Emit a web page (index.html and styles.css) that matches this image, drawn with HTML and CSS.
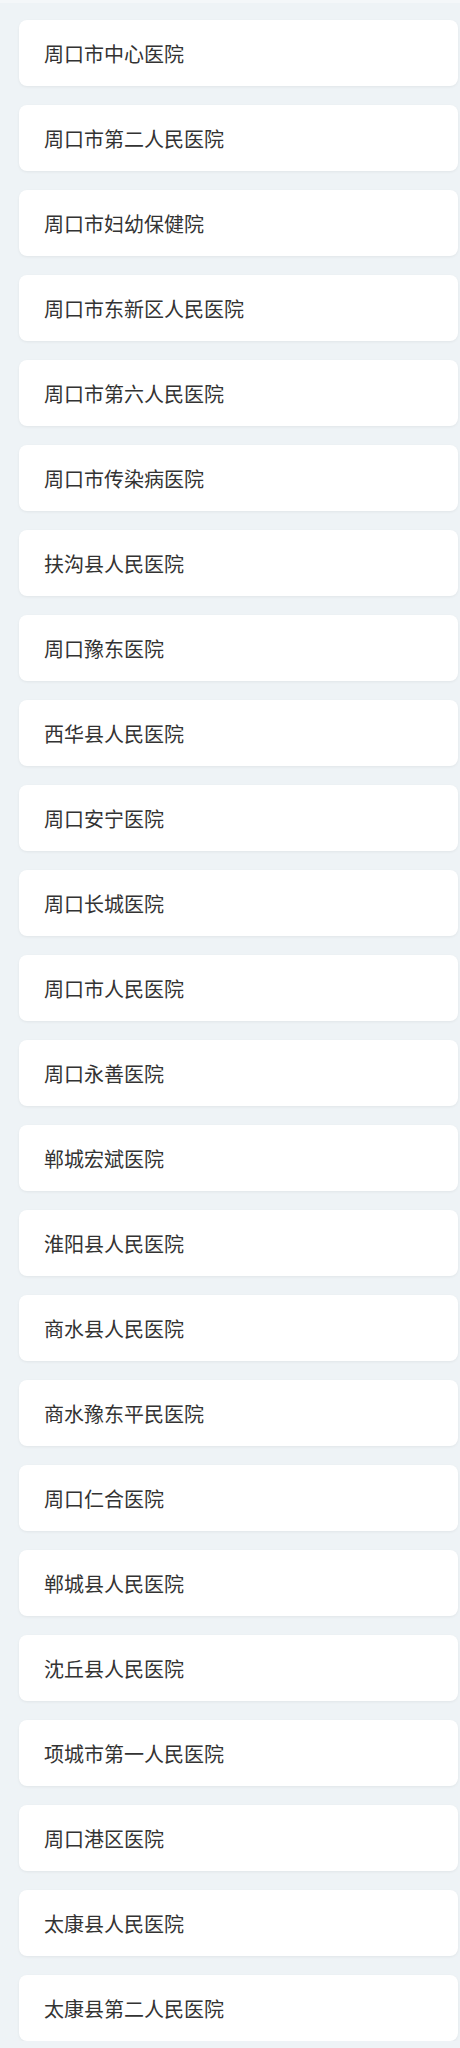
FILE: index.html
```html
<!DOCTYPE html>
<html lang="zh-CN">
<head>
<meta charset="utf-8">
<link rel="stylesheet" href="styles.css">
</head>
<body>
<div class="topbar"></div>
<ul class="list">
<li class="card">周口市中心医院</li>
<li class="card">周口市第二人民医院</li>
<li class="card">周口市妇幼保健院</li>
<li class="card">周口市东新区人民医院</li>
<li class="card">周口市第六人民医院</li>
<li class="card">周口市传染病医院</li>
<li class="card">扶沟县人民医院</li>
<li class="card">周口豫东医院</li>
<li class="card">西华县人民医院</li>
<li class="card">周口安宁医院</li>
<li class="card">周口长城医院</li>
<li class="card">周口市人民医院</li>
<li class="card">周口永善医院</li>
<li class="card">郸城宏斌医院</li>
<li class="card">淮阳县人民医院</li>
<li class="card">商水县人民医院</li>
<li class="card">商水豫东平民医院</li>
<li class="card">周口仁合医院</li>
<li class="card">郸城县人民医院</li>
<li class="card">沈丘县人民医院</li>
<li class="card">项城市第一人民医院</li>
<li class="card">周口港区医院</li>
<li class="card">太康县人民医院</li>
<li class="card">太康县第二人民医院</li>
</ul>
</body>
</html>
```
FILE: styles.css
```css
html, body {
  margin: 0;
  padding: 0;
  background: #eef3f6;
}
body {
  font-family: "Noto Sans CJK SC", "Noto Sans", sans-serif;
  color: #333333;
}
.topbar {
  height: 3px;
  background: #f4f7f9;
}
.list {
  list-style: none;
  margin: 0;
  padding: 17px 2px 0 19px;
  display: flex;
  flex-direction: column;
  gap: 19px;
}
.card {
  height: 66px;
  box-sizing: border-box;
  padding: 2px 0 0 25px;
  line-height: 64px;
  font-size: 20px;
  background: #ffffff;
  border-radius: 8px;
  box-shadow: 0 1px 3px rgba(0, 0, 0, 0.06);
}
```
